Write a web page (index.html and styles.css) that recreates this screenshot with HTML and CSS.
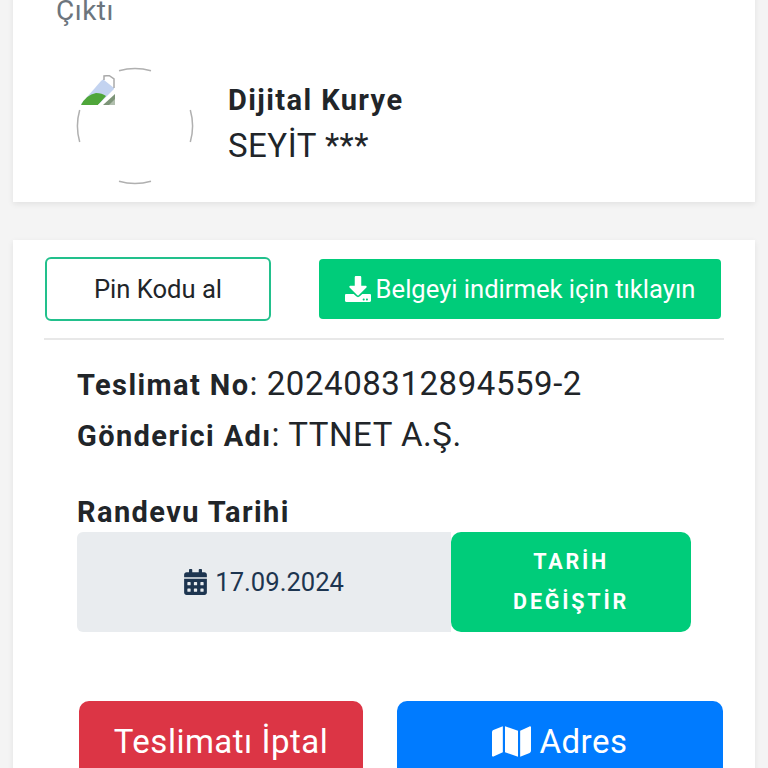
FILE: index.html
```html
<!DOCTYPE html>
<html lang="tr">
<head>
    <meta charset="UTF-8">
    <meta name="viewport" content="width=device-width, initial-scale=1.0">
    <title>Teslimat</title>
    <link rel="stylesheet" href="styles.css">
</head>
<body>
    <div class="page">
        <section class="card courier-card">
            <p class="status">Çıktı</p>
            <div class="courier">
                <div class="avatar">
                    <svg class="avatar-ring" width="118" height="118" viewBox="0 0 118 118">
                        <path d="M43 3.700 A58 58 0 0 1 75 3.700" />
                        <path d="M43 114.300 A58 58 0 0 0 75 114.300" />
                        <path d="M3.700 43 A58 58 0 0 0 3.700 75" />
                        <path d="M114.300 43 A58 58 0 0 1 114.300 75" />
                    </svg>
                    <svg class="broken-image" width="34" height="30" viewBox="0 0 34 30">
                        <path d="M0 29 L20 6 L24 3 L33 4 L33 16 L20 29 Z" fill="#c3d3f0" />
                        <path d="M23 5 L23 1 L28 0.500 L33 4 L33 13" fill="#fff" stroke="#a9a9a9" stroke-width="1.500" />
                        <path d="M0 30 Q5 20 15 18 Q21 18 25 21 L17 30 Z" fill="#4fa63a" />
                        <path d="M17 30 L22 30 L34 18 L34 13 Z" fill="#fff" />
                        <path d="M22 30 L34 19 L34 30 Z" fill="#7d9478" />
                        <path d="M28 30 L34 24 L34 30 Z" fill="#fff" opacity="0.400" />
                    </svg>
                </div>
                <div class="courier-info">
                    <div class="courier-title">Dijital Kurye</div>
                    <div class="courier-name">SEYİT ***</div>
                </div>
            </div>
        </section>

        <section class="card delivery-card">
            <div class="top-actions">
                <button class="btn btn-outline" type="button">Pin Kodu al</button>
                <button class="btn btn-green" type="button">
                    <svg class="icon" width="26" height="26" viewBox="0 0 512 512"><path d="M216 0h80c13.300 0 24 10.700 24 24v168h87.700c17.800 0 26.700 21.500 14.100 34.100L269.700 378.300c-7.500 7.500-19.800 7.500-27.300 0L90.100 226.100c-12.600-12.600-3.700-34.100 14.100-34.100H192V24c0-13.300 10.700-24 24-24zm296 376v112c0 13.300-10.700 24-24 24H24c-13.300 0-24-10.700-24-24V376c0-13.300 10.700-24 24-24h146.700l49 49c20.100 20.100 52.500 20.100 72.600 0l49-49H488c13.300 0 24 10.700 24 24zm-124 88c0-11-9-20-20-20s-20 9-20 20 9 20 20 20 20-9 20-20zm64 0c0-11-9-20-20-20s-20 9-20 20 9 20 20 20 20-9 20-20z" /></svg>
                    Belgeyi indirmek için tıklayın
                </button>
            </div>
            <hr class="divider">
            <div class="details">
                <p class="detail"><strong>Teslimat No</strong>: 202408312894559-2</p>
                <p class="detail"><strong>Gönderici Adı</strong>: TTNET A.Ş.</p>
                <div class="date-label">Randevu Tarihi</div>
                <div class="date-row">
                    <div class="date-value">
                        <svg class="icon" width="23" height="26" viewBox="0 0 448 512"><path d="M0 464c0 26.500 21.500 48 48 48h352c26.500 0 48-21.500 48-48V192H0v272zm320-196c0-6.600 5.400-12 12-12h40c6.600 0 12 5.400 12 12v40c0 6.600-5.400 12-12 12h-40c-6.600 0-12-5.400-12-12v-40zm0 128c0-6.600 5.400-12 12-12h40c6.600 0 12 5.400 12 12v40c0 6.600-5.400 12-12 12h-40c-6.600 0-12-5.400-12-12v-40zM192 268c0-6.600 5.400-12 12-12h40c6.600 0 12 5.400 12 12v40c0 6.600-5.400 12-12 12h-40c-6.600 0-12-5.400-12-12v-40zm0 128c0-6.600 5.400-12 12-12h40c6.600 0 12 5.400 12 12v40c0 6.600-5.400 12-12 12h-40c-6.600 0-12-5.400-12-12v-40zM64 268c0-6.600 5.400-12 12-12h40c6.600 0 12 5.400 12 12v40c0 6.600-5.400 12-12 12H76c-6.600 0-12-5.400-12-12v-40zm0 128c0-6.600 5.400-12 12-12h40c6.600 0 12 5.400 12 12v40c0 6.600-5.400 12-12 12H76c-6.600 0-12-5.400-12-12v-40zM400 64h-48V16c0-8.800-7.200-16-16-16h-32c-8.800 0-16 7.200-16 16v48H160V16c0-8.800-7.200-16-16-16h-32c-8.800 0-16 7.200-16 16v48H48C21.500 64 0 85.500 0 112v48h448v-48c0-26.500-21.500-48-48-48z" /></svg>
                        17.09.2024
                    </div>
                    <button class="btn-date" type="button">TARİH DEĞİŞTİR</button>
                </div>
            </div>
            <div class="bottom-actions">
                <button class="btn btn-red" type="button">Teslimatı İptal</button>
                <button class="btn btn-blue" type="button">
                    <svg class="icon" width="39" height="35" viewBox="0 0 576 512"><path d="M0 117.660v346.320c0 11.320 11.430 19.060 21.950 14.860L160 416V32L20.120 87.950A32.006 32.006 0 0 0 0 117.660zM192 416l192 64V96L192 32v384zM554.060 33.160L416 96v384l139.880-55.950A31.996 31.996 0 0 0 576 394.340V48.020c0-11.320-11.430-19.060-21.940-14.860z" /></svg>
                    Adres
                </button>
            </div>
        </section>
    </div>
</body>
</html>
```

FILE: styles.css
```css
* {
    box-sizing: border-box;
}

body {
    margin: 0;
    height: 768px;
    overflow: hidden;
    background-color: #f4f4f4;
    color: #212529;
    font-family: Roboto, "Liberation Sans", sans-serif;
}

.page {
    padding: 0 13px;
    margin-top: -14px;
}

.card {
    background-color: #fff;
    box-shadow: 0 2px 6px rgba(0, 0, 0, 0.08);
}

.courier-card {
    height: 216px;
    padding: 0 43px;
    margin-bottom: 38px;
}

.status {
    margin: 0;
    padding-top: 7px;
    font-size: 28px;
    letter-spacing: 0.5px;
    line-height: 36px;
    color: #6c757d;
}

.courier {
    display: flex;
    align-items: center;
    gap: 34px;
    margin: 38px 0 0 20px;
}

.avatar {
    position: relative;
    width: 118px;
    height: 118px;
    flex: none;
}

.avatar-ring {
    display: block;
    fill: none;
    stroke: #b0b0b0;
    stroke-width: 1.5;
}

.broken-image {
    position: absolute;
    left: 5px;
    top: 8px;
}

.courier-info {
    padding-bottom: 6px;
}

.courier-title {
    font-size: 29px;
    font-weight: 700;
    letter-spacing: 1.4px;
    line-height: 46px;
}

.courier-name {
    font-size: 33px;
    letter-spacing: 0.5px;
    line-height: 46px;
}

.delivery-card {
    height: 560px;
    padding: 17px 32px 0;
}

.top-actions {
    display: flex;
    align-items: center;
    justify-content: space-between;
}

.btn {
    display: flex;
    align-items: center;
    justify-content: center;
    border: none;
    border-radius: 4px;
    color: #fff;
    font-family: inherit;
    font-size: 25.6px;
}

.icon {
    display: block;
    fill: currentColor;
    flex: none;
}

.btn-outline {
    width: 226px;
    height: 64px;
    background-color: #fff;
    border: 2px solid #22c08c;
    border-radius: 6px;
    color: #212529;
}

.btn-green {
    width: 402px;
    height: 60px;
    margin-right: 2px;
    gap: 5px;
    background-color: #00cc7a;
}

.divider {
    height: 2px;
    margin: 17px -1px 0;
    border: none;
    background-color: #e8e8e8;
}

.details {
    padding: 0 32px;
}

.detail {
    margin: 0;
    font-size: 33px;
    line-height: 51px;
    letter-spacing: 0.55px;
}

.detail:first-child {
    margin-top: 18px;
}

.detail strong {
    font-size: 29px;
    letter-spacing: 1.4px;
    line-height: 1;
}

.date-label {
    margin-top: 32px;
    font-size: 29px;
    font-weight: 700;
    letter-spacing: 1.4px;
    line-height: 40px;
}

.date-row {
    display: flex;
    height: 100px;
}

.date-value {
    display: flex;
    align-items: center;
    justify-content: center;
    gap: 8px;
    width: 375px;
    border-radius: 6px 0 0 6px;
    background-color: #e9ecef;
    color: #1d3550;
    font-size: 25.6px;
}

.btn-date {
    width: 240px;
    border: none;
    border-radius: 10px;
    padding: 0 50px;
    background-color: #00cc7a;
    color: #fff;
    font-family: inherit;
    font-size: 21.5px;
    font-weight: 700;
    letter-spacing: 2.8px;
    line-height: 40px;
}

.bottom-actions {
    display: flex;
    gap: 34px;
    margin: 69px 0 0 34px;
}

.btn-red,
.btn-blue {
    height: 80px;
    border-radius: 10px;
    font-size: 33px;
    letter-spacing: 0.5px;
}

.btn-red {
    width: 284px;
    background-color: #dc3545;
}

.btn-blue {
    width: 326px;
    gap: 8px;
    background-color: #007bff;
}
```
